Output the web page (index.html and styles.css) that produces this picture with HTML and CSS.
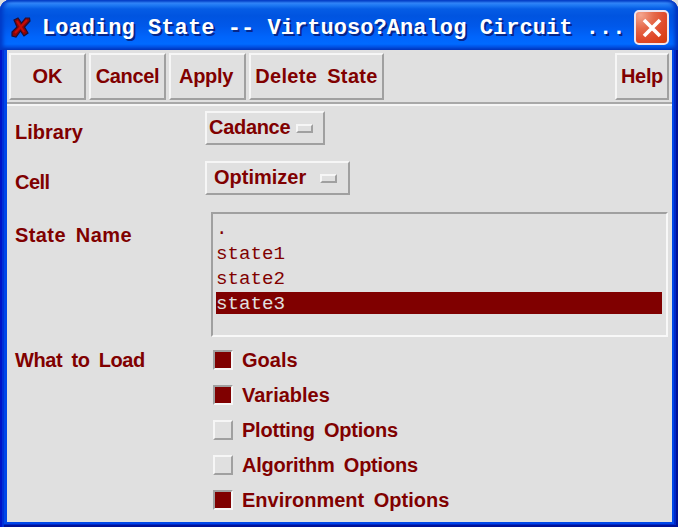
FILE: index.html
```
<!DOCTYPE html>
<html lang="en">
<head>
<meta charset="utf-8">
<title>Loading State</title>
<link rel="stylesheet" href="styles.css">
</head>
<body>
<div class="window">
  <header class="titlebar">
    <svg class="app-icon" width="20" height="21" viewBox="0 0 20 21"><path d="M3 3 L7 1 L10.5 6 L14.5 1 L18.5 1 L19 4 L13.5 10 L17 16 L13 19 L9.5 14 L5 20 L1 19 L1 15 L6 10 Z" fill="#8c0505" stroke="#1d1038" stroke-width="1.2"/><path d="M6 4 L13 15 M16 3 L4 16" stroke="#c50b08" stroke-width="2"/></svg>
    <h1 class="title">Loading State -- Virtuoso?Analog Circuit ...</h1>
    <button class="close" aria-label="Close"><svg width="20" height="20" viewBox="0 0 20 20"><path d="M2 2 L18 18 M18 2 L2 18" stroke="#fff" stroke-width="3.6"/></svg></button>
  </header>
  <nav class="toolbar">
    <button class="btn ok"><span>OK</span></button>
    <button class="btn cancel"><span>Cancel</span></button>
    <button class="btn apply"><span>Apply</span></button>
    <button class="btn delete"><span>Delete State</span></button>
    <button class="btn help"><span>Help</span></button>
  </nav>
  <main class="form">
    <div class="row library">
      <div class="label"><span>Library</span></div>
      <button class="select"><span>Cadance</span><i class="knob"></i></button>
    </div>
    <div class="row cell">
      <div class="label"><span>Cell</span></div>
      <button class="select"><span>Optimizer</span><i class="knob"></i></button>
    </div>
    <div class="row states">
      <div class="label"><span>State Name</span></div>
      <ul class="list"><li>.</li><li>state1</li><li>state2</li><li class="selected">state3</li></ul>
    </div>
    <div class="row load">
      <div class="label"><span>What to Load</span></div>
      <div class="checks">
        <div class="check goals"><i class="box on"></i><span>Goals</span></div>
        <div class="check variables"><i class="box on"></i><span>Variables</span></div>
        <div class="check plotting"><i class="box"></i><span>Plotting Options</span></div>
        <div class="check algorithm"><i class="box"></i><span>Algorithm Options</span></div>
        <div class="check environment"><i class="box on"></i><span>Environment Options</span></div>
      </div>
    </div>
  </main>
</div>
</body>
</html>
```
FILE: styles.css
```
* { box-sizing: border-box; }
body { margin: 0; background: #dedede; overflow: hidden; }
button, ul, h1 { margin: 0; padding: 0; }
.window {
  width: 678px; height: 527px; padding: 0 6px 5px 7px;
  border-radius: 10px 10px 0 0;
  background: #0047e8;
  box-shadow: inset 2px 0 #0014c8, inset 4px 0 #0030d8, inset -2px -2px #001296, inset -4px -3px #0028c8;
  display: flex; flex-direction: column;
  font: bold 20px/24px "Liberation Sans", Arial, sans-serif; color: #800000;
  word-spacing: 4px;
}
.titlebar {
  height: 50px; margin: 0 -6px 0 -7px; padding: 5px 9px 0 11px;
  border-radius: 10px 10px 0 0; flex: none;
  display: flex; align-items: center;
  background: linear-gradient(#0a50d0 0, #3a91ff 3px, #207bf4 5px, #055ce5 9px, #0054e0 16px, #0058ea 26px, #0065fc 37px, #006aff 44px, #0050df 48px, #0039b8 50px);
  box-shadow: inset 3px 0 4px #0039c5, inset -3px 0 4px #0030bc;
}
.app-icon { flex: none; }
.title {
  flex: 1; margin-left: 11px; padding-top: 2px; white-space: pre; color: #fff;
  font: bold 22px/26px "Liberation Mono", monospace; letter-spacing: .06px; word-spacing: 0;
  text-shadow: 2px 2px #06268a;
}
.close {
  width: 35px; height: 35px; border: 2px solid #eee5ef; border-radius: 5px;
  background: radial-gradient(circle at 15% 10%, #f4a58e 0, #e5694a 35%, #e0492a 65%, #d53a0a 100%);
  display: flex; align-items: center; justify-content: center;
}
.toolbar {
  height: 54px; padding: 3px 3px 0 2px; flex: none;
  display: flex; gap: 3px; background: #e0e0e0;
  border-bottom: 2px solid #a8a8a8;
}
.btn, .select {
  border: 2px solid; border-color: #f6f6f6 #a0a0a0 #a0a0a0 #f6f6f6;
  background: #e0e0e0; color: inherit; font: inherit; word-spacing: inherit;
}
.btn { height: 47px; width: 77px; padding-bottom: 2px; white-space: nowrap; text-align: center; }
.btn.cancel, .btn.apply, .btn.help { letter-spacing: -.35px; }
.btn.apply { padding-right: 3px; }
.btn.delete { width: 135px; letter-spacing: .35px; }
.btn.help { width: 54px; margin-left: auto; }
.form {
  height: 418px; flex: none; background: #e0e0e0;
  border-top: 2px solid #f5f5f5; padding: 5px 4px 0 8px;
}
.row { display: flex; }
.label { width: 190px; flex: none; white-space: nowrap; }
.library { height: 50px; }
.cell { height: 51px; }
.library .label, .cell .label { padding-top: 9px; }
.cell .label { letter-spacing: -.5px; }
.select { height: 34px; width: 120px; display: flex; align-items: center; padding: 0 10px 2px 2px; justify-content: space-between; }
.library .select { letter-spacing: -.3px; }
.cell .select { width: 145px; padding: 0 11px 2px 7px; }
.knob { width: 17px; height: 9px; margin-top: 3px; border: 2px solid; border-color: #f6f6f6 #a0a0a0 #a0a0a0 #f6f6f6; }
.states { height: 137px; }
.states .label { width: 196px; padding-top: 11px; letter-spacing: .4px; }
.list {
  flex: 1; height: 125px; list-style: none; padding: 4px 4px 0 3px;
  border: 2px solid; border-color: #a0a0a0 #f8f8f8 #f8f8f8 #a0a0a0;
  font: 19.2px/22px "Liberation Mono", monospace;
}
.list li { height: 25px; }
.list .selected { background: #800000; color: #e0e0e0; height: 22px; margin-top: -1px; line-height: 24px; }
.load .label, .check span { margin-top: -1px; }
.load .label { width: 198px; letter-spacing: -.4px; }
.checks { display: flex; flex-direction: column; }
.check { height: 35px; display: flex; gap: 9px; white-space: nowrap; }
.plotting, .algorithm { letter-spacing: -.22px; }
.box { width: 20px; height: 20px; margin-top: 1px; border: 2px solid; border-color: #f6f6f6 #a0a0a0 #a0a0a0 #f6f6f6; flex: none; }
.box.on { background: #800000; border-color: #a0a0a0 #f6f6f6 #f6f6f6 #a0a0a0; background-clip: padding-box; }
```
